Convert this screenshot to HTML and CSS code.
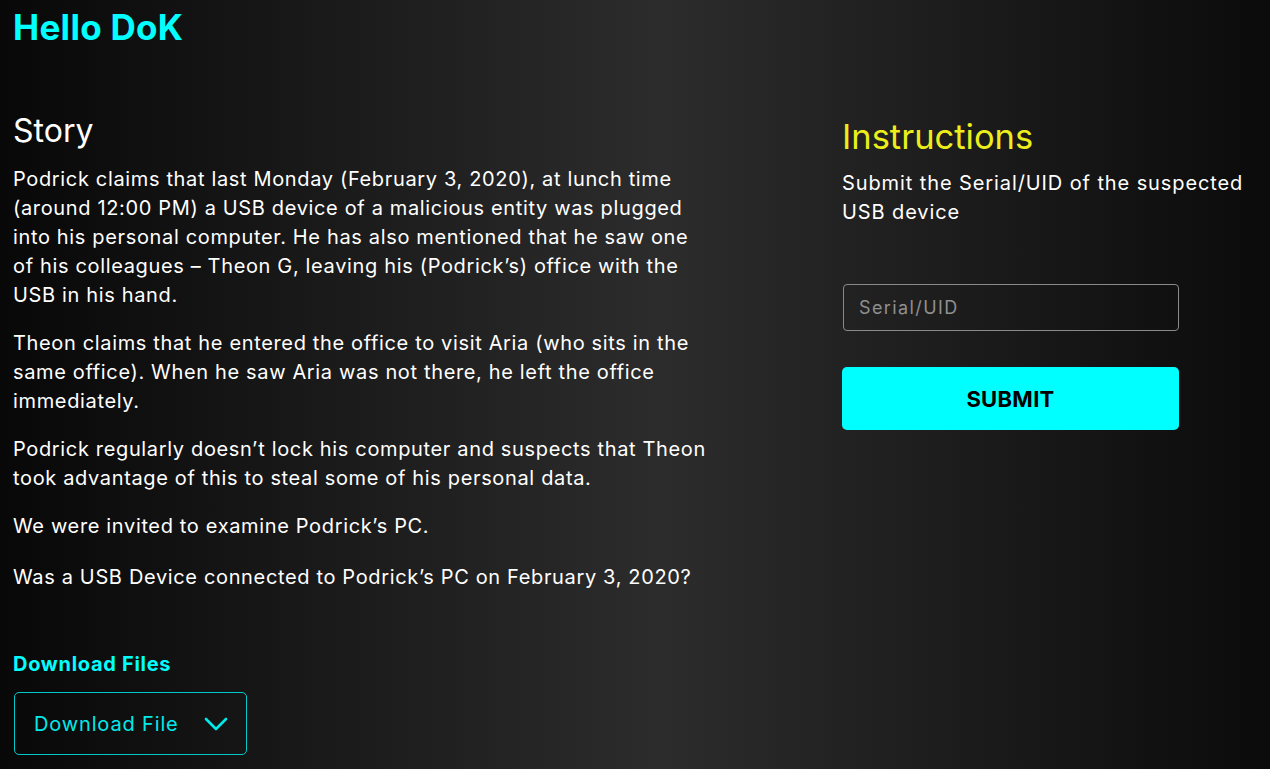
FILE: index.html
```html
<!DOCTYPE html>
<html lang="en">
<head>
<meta charset="utf-8">
<title>Hello DoK</title>
<link rel="stylesheet" href="styles.css">
</head>
<body>
<header class="top">
  <h1 class="greeting">Hello DoK</h1>
</header>
<main class="layout">
  <section class="story">
    <h2 class="section-title">Story</h2>
    <p class="text">Podrick claims that last Monday (February 3, 2020), at lunch time (around 12:00 PM) a USB device of a malicious entity was plugged into his personal computer. He has also mentioned that he saw one of his colleagues – Theon G, leaving his (Podrick’s) office with the USB in his hand.</p>
    <p class="text">Theon claims that he entered the office to visit Aria (who sits in the same office). When he saw Aria was not there, he left the office immediately.</p>
    <p class="text">Podrick regularly doesn’t lock his computer and suspects that Theon took advantage of this to steal some of his personal data.</p>
    <p class="text">We were invited to examine Podrick’s PC.</p>
    <p class="text question">Was a USB Device connected to Podrick’s PC on February 3, 2020?</p>
    <div class="downloads">
      <h3 class="downloads-title">Download Files</h3>
      <button class="dropdown" type="button">
        <span>Download File</span>
        <svg class="chevron" width="24" height="14" viewBox="0 0 24 14" aria-hidden="true"><path d="M2 2 L12 12 L22 2" fill="none" stroke="currentColor" stroke-width="2.6" stroke-linecap="round" stroke-linejoin="round"/></svg>
      </button>
    </div>
  </section>
  <aside class="instructions">
    <h2 class="section-title yellow">Instructions</h2>
    <p class="text wide">Submit the Serial/UID of the suspected USB device</p>
    <form class="answer">
      <input class="field" type="text" placeholder="Serial/UID">
      <button class="submit" type="button">SUBMIT</button>
    </form>
  </aside>
</main>
</body>
</html>
```
FILE: styles.css
```css
html, body { height: 100%; }
body {
  margin: 0;
  padding: 0 13px;
  font-family: Inter, "Open Sans", sans-serif;
  color: #ffffff;
  background: linear-gradient(90deg, #080808 0%, #2c2c2c 52%, #0b0b0b 100%);
  overflow: hidden;
}
.top { padding-top: 6px; }
.greeting {
  margin: 0;
  font-size: 35px;
  line-height: 42px;
  font-weight: 700;
  color: #00ffff;
  letter-spacing: 0.3px;
}
.layout {
  display: grid;
  grid-template-columns: 829px 1fr;
  margin-top: 63px;
}
.story { width: 698px; }
.section-title {
  margin: 0 0 14px;
  font-size: 32px;
  line-height: 40px;
  font-weight: 400;
}
.yellow {
  color: #eded1c;
  margin-top: 6px;
  margin-bottom: 12px;
  font-size: 34.5px;
}
.text {
  margin: 0 0 19px;
  font-size: 20px;
  line-height: 29px;
  letter-spacing: 0.65px;
}
.wide { letter-spacing: 0.9px; }
.question { margin-top: 22px; }
.downloads { margin-top: 60px; }
.downloads-title {
  margin: 0 0 16px;
  font-size: 20px;
  line-height: 24px;
  font-weight: 700;
  color: #00ffff;
  letter-spacing: 0.7px;
}
.dropdown {
  display: flex;
  align-items: center;
  gap: 25px;
  height: 63px;
  padding: 0 18px 0 19px;
  margin-left: 1px;
  background: transparent;
  border: 1.5px solid #00c9c9;
  border-radius: 5px;
  color: #00eaea;
  font-family: inherit;
  font-size: 20px;
  letter-spacing: 0.85px;
}
.chevron { color: #00eaea; }
.instructions .text { margin-bottom: 0; }
.answer {
  display: flex;
  flex-direction: column;
  width: 337px;
  margin-top: 57px;
}
.field {
  height: 47px;
  box-sizing: border-box;
  padding: 0 15px;
  margin-left: 1px;
  width: 336px;
  background: transparent;
  border: 1px solid #8a8a8a;
  border-radius: 4px;
  color: #fff;
  font-family: inherit;
  font-size: 18px;
  letter-spacing: 1.4px;
}
.field::placeholder { color: #8f8f8f; }
.submit {
  margin-top: 36px;
  height: 63px;
  background: #00ffff;
  border: none;
  border-radius: 5px;
  color: #000;
  font-family: inherit;
  font-size: 22px;
  font-weight: 700;
  letter-spacing: 0.3px;
}
```
